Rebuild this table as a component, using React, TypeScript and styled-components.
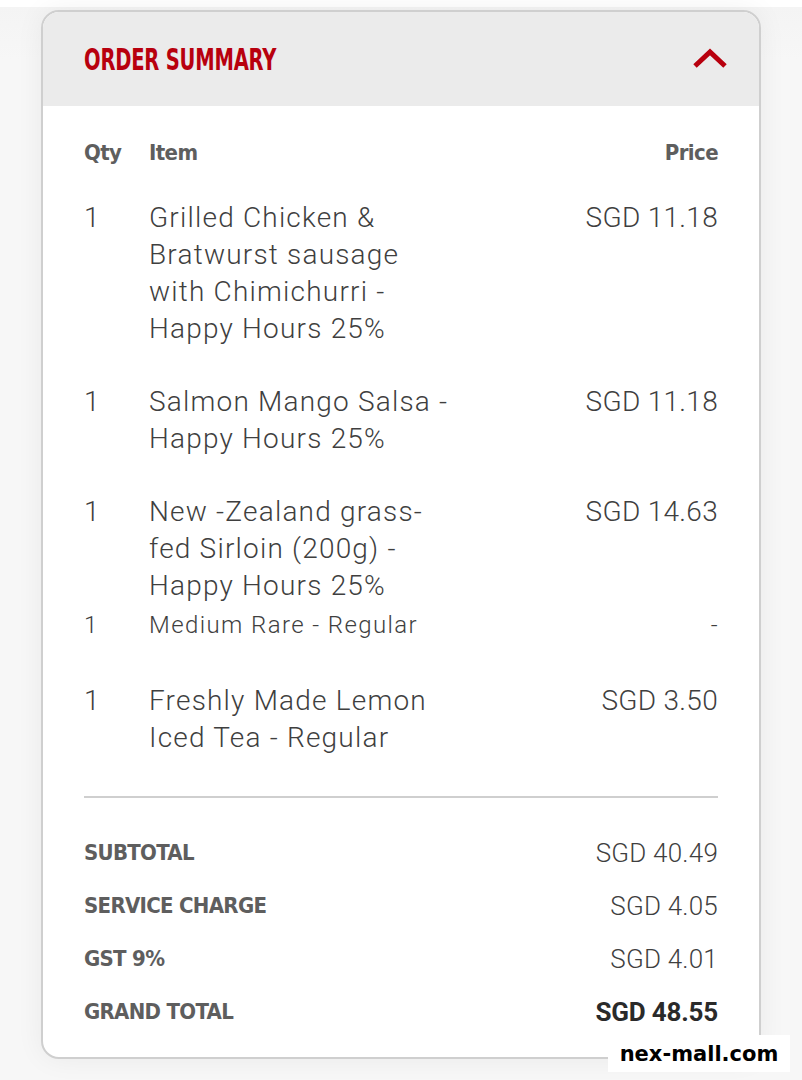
import * as React from "react";
import styled, { createGlobalStyle } from "styled-components";

const GlobalStyle = createGlobalStyle`
  html, body {
    margin: 0;
    padding: 0;
    background: #f6f6f6;
  }
  body {
    font-family: Roboto, "Noto Sans", sans-serif;
  }
`;

const colors = {
  red: "#b8000e",
  text: "#3f3f3f",
  muted: "#5e5e5e",
  line: "#cfcfcf",
  headerBg: "#ebebeb",
};

const condensed = `"DejaVu Sans Condensed", "Liberation Sans Narrow", sans-serif`;

const Page = styled.div`
  position: relative;
  width: 802px;
  height: 1080px;
  overflow: hidden;
  padding-top: 10px;
  box-sizing: border-box;
  background: linear-gradient(#ffffff 0, #ffffff 7px, #f4f4f4 7px, #f7f7f7 60px);
`;

const Card = styled.section`
  margin-left: 41px;
  width: 720px;
  height: 1049px;
  box-sizing: border-box;
  border: 2px solid ${colors.line};
  border-radius: 18px;
  background: #fff;
  overflow: hidden;
  box-shadow: 0 0 28px rgba(0, 0, 0, 0.06);
`;

const Header = styled.header`
  display: flex;
  align-items: center;
  justify-content: space-between;
  height: 94px;
  padding: 0 31px 0 41px;
  background: ${colors.headerBg};
`;

const Title = styled.h2`
  margin: 0;
  font-family: ${condensed};
  font-weight: 700;
  font-size: 31px;
  letter-spacing: -0.3px;
  color: ${colors.red};
  transform: scaleX(0.7);
  transform-origin: left center;
`;

const Body = styled.div`
  padding: 35px 41px 0;
`;

const Grid = styled.div`
  display: grid;
  grid-template-columns: 65px 300px 1fr;
`;

const ColHead = styled.div<{ $right?: boolean }>`
  font-family: ${condensed};
  font-weight: 700;
  font-size: 22px;
  line-height: 24px;
  letter-spacing: -0.6px;
  color: ${colors.muted};
  text-align: ${p => (p.$right ? "right" : "left")};
  margin-bottom: 34px;
`;

const Cell = styled.div<{ $right?: boolean; $small?: boolean; $gap: number }>`
  font-weight: 300;
  font-size: ${p => (p.$small ? 24 : 28)}px;
  line-height: ${p => (p.$small ? 32 : 37)}px;
  letter-spacing: ${p => (p.$right ? 0.3 : p.$small ? 1.4 : 1.2)}px;
  color: ${colors.text};
  text-align: ${p => (p.$right ? "right" : "left")};
  margin-bottom: ${p => p.$gap}px;
`;

const Divider = styled.hr`
  margin: 2px 0 28px;
  border: 0;
  border-top: 2px solid ${colors.line};
`;

const TotalRow = styled.div`
  display: flex;
  align-items: center;
  justify-content: space-between;
  height: 53px;
`;

const TotalLabel = styled.span`
  font-family: ${condensed};
  font-weight: 700;
  font-size: 22px;
  letter-spacing: -0.7px;
  color: ${colors.muted};
`;

const TotalValue = styled.span<{ $bold?: boolean }>`
  font-weight: ${p => (p.$bold ? 700 : 300)};
  font-size: 26px;
  letter-spacing: ${p => (p.$bold ? -0.2 : 0.2)}px;
  color: ${p => (p.$bold ? "#2a2a2a" : colors.text)};
`;

const Watermark = styled.div`
  position: absolute;
  left: 608px;
  top: 1035px;
  width: 182px;
  height: 37px;
  display: flex;
  align-items: center;
  justify-content: center;
  background: #fff;
  font-family: "DejaVu Sans", sans-serif;
  font-weight: 700;
  font-size: 21px;
  color: #000;
`;

const Chevron = () => (
  <svg width="36" height="24" viewBox="0 0 36 24">
    <polyline
      points="3,19 18,5 33,19"
      fill="none"
      stroke={colors.red}
      strokeWidth="5"
    />
  </svg>
);

type Line = { qty: number; name: string; price: string; small?: boolean; gap: number };

const lines: Line[] = [
  { qty: 1, name: "Grilled Chicken & Bratwurst sausage with Chimichurri - Happy Hours 25%", price: "SGD 11.18", gap: 36 },
  { qty: 1, name: "Salmon Mango Salsa - Happy Hours 25%", price: "SGD 11.18", gap: 36 },
  { qty: 1, name: "New -Zealand grass-fed Sirloin (200g) - Happy Hours 25%", price: "SGD 14.63", gap: 5 },
  { qty: 1, name: "Medium Rare - Regular", price: "-", small: true, gap: 41 },
  { qty: 1, name: "Freshly Made Lemon Iced Tea - Regular", price: "SGD 3.50", gap: 38 },
];

const totals = [
  { label: "SUBTOTAL", value: "SGD 40.49" },
  { label: "SERVICE CHARGE", value: "SGD 4.05" },
  { label: "GST 9%", value: "SGD 4.01" },
  { label: "GRAND TOTAL", value: "SGD 48.55", bold: true },
];

export default function App() {
  return (
    <Page>
      <GlobalStyle />
      <Card>
        <Header>
          <Title>ORDER SUMMARY</Title>
          <Chevron />
        </Header>
        <Body>
          <Grid>
            <ColHead>Qty</ColHead>
            <ColHead>Item</ColHead>
            <ColHead $right>Price</ColHead>
            {lines.map((l, i) => (
              <React.Fragment key={i}>
                <Cell $small={l.small} $gap={l.gap}>{l.qty}</Cell>
                <Cell $small={l.small} $gap={l.gap}>{l.name}</Cell>
                <Cell $small={l.small} $gap={l.gap} $right>{l.price}</Cell>
              </React.Fragment>
            ))}
          </Grid>
          <Divider />
          {totals.map(t => (
            <TotalRow key={t.label}>
              <TotalLabel>{t.label}</TotalLabel>
              <TotalValue $bold={t.bold}>{t.value}</TotalValue>
            </TotalRow>
          ))}
        </Body>
      </Card>
      <Watermark>nex-mall.com</Watermark>
    </Page>
  );
}
